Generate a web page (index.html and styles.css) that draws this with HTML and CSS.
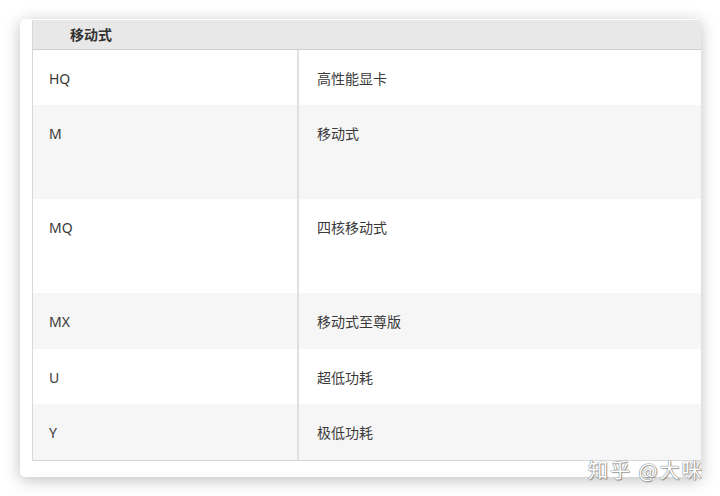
FILE: index.html
```html
<!DOCTYPE html>
<html lang="zh">
<head>
<meta charset="utf-8">
<link rel="stylesheet" href="styles.css">
</head>
<body>
<div class="card">
  <div class="table">
    <div class="head">移动式</div>
    <div class="row r-short"><div class="c1">HQ</div><div class="c2">高性能显卡</div></div>
    <div class="row alt r-tall"><div class="c1">M</div><div class="c2">移动式</div></div>
    <div class="row r-tall"><div class="c1">MQ</div><div class="c2">四核移动式</div></div>
    <div class="row alt r-short"><div class="c1">MX</div><div class="c2">移动式至尊版</div></div>
    <div class="row r-short"><div class="c1">U</div><div class="c2">超低功耗</div></div>
    <div class="row alt r-short"><div class="c1">Y</div><div class="c2">极低功耗</div></div>
  </div>
</div>
<div class="watermark">知乎 @大咪</div>
</body>
</html>
```
FILE: styles.css
```css
html, body {
  margin: 0;
  padding: 0;
  background: #ffffff;
  width: 720px;
  height: 496px;
  overflow: hidden;
  font-family: "Noto Sans", "Noto Sans CJK SC", sans-serif;
  color: #3a3a3a;
}
.card {
  margin: 19px 0 0 20px;
  width: 681px;
  height: 458px;
  box-sizing: border-box;
  padding: 1px 0 0 12px;
  background: #fff;
  border-radius: 5px;
  box-shadow: 0 3px 16px rgba(0,0,0,0.25);
  overflow: hidden;
}
.table {
  border-left: 1px solid #d8d8d8;
  border-bottom: 1px solid #d8d8d8;
}
.head {
  height: 29px;
  background: #e8e8e8;
  border-bottom: 1px solid #cfcfcf;
  font-size: 14px;
  font-weight: 600;
  line-height: 29px;
  padding-left: 37px;
  color: #333;
}
.row {
  display: grid;
  grid-template-columns: 266px 1fr;
  background: #fff;
  font-size: 14px;
  line-height: 16px;
}
.row.alt { background: #f6f6f6; }
.r-short { height: 55px; }
.r-tall { height: 94px; }
.row.alt.r-short { height: 56px; }
.c1 {
  padding: 21px 0 0 16px;
  border-right: 2px solid #e0e0e0;
}
.c2 {
  padding: 21px 0 0 18px;
}
.watermark {
  position: absolute;
  left: 588px;
  top: 455px;
  font-family: "Noto Sans CJK SC", sans-serif;
  font-size: 20px;
  color: #fff;
  letter-spacing: 2px;
  text-shadow: 0 0 1px #777, 0 0 1px #777, 1px 1px 1px rgba(0,0,0,0.35);
}
```
